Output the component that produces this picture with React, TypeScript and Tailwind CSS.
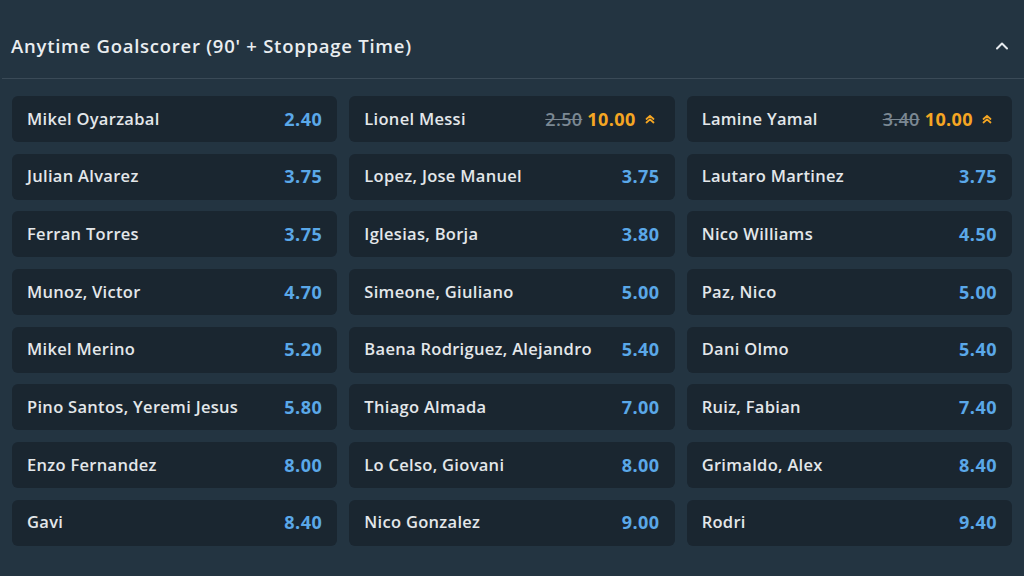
type Pick = { name: string; odds: string; was?: string };

const picks: Pick[] = [
  { name: "Mikel Oyarzabal", odds: "2.40" },
  { name: "Lionel Messi", odds: "10.00", was: "2.50" },
  { name: "Lamine Yamal", odds: "10.00", was: "3.40" },
  { name: "Julian Alvarez", odds: "3.75" },
  { name: "Lopez, Jose Manuel", odds: "3.75" },
  { name: "Lautaro Martinez", odds: "3.75" },
  { name: "Ferran Torres", odds: "3.75" },
  { name: "Iglesias, Borja", odds: "3.80" },
  { name: "Nico Williams", odds: "4.50" },
  { name: "Munoz, Victor", odds: "4.70" },
  { name: "Simeone, Giuliano", odds: "5.00" },
  { name: "Paz, Nico", odds: "5.00" },
  { name: "Mikel Merino", odds: "5.20" },
  { name: "Baena Rodriguez, Alejandro", odds: "5.40" },
  { name: "Dani Olmo", odds: "5.40" },
  { name: "Pino Santos, Yeremi Jesus", odds: "5.80" },
  { name: "Thiago Almada", odds: "7.00" },
  { name: "Ruiz, Fabian", odds: "7.40" },
  { name: "Enzo Fernandez", odds: "8.00" },
  { name: "Lo Celso, Giovani", odds: "8.00" },
  { name: "Grimaldo, Alex", odds: "8.40" },
  { name: "Gavi", odds: "8.40" },
  { name: "Nico Gonzalez", odds: "9.00" },
  { name: "Rodri", odds: "9.40" },
];

function BoostIcon() {
  return (
    <svg width="12" height="12" viewBox="0 0 12 12" fill="none" stroke="#f5a623" strokeWidth="1.8" strokeLinecap="round" strokeLinejoin="round">
      <path d="M2.5 6 L6 2.8 L9.5 6" />
      <path d="M2.5 9.5 L6 6.3 L9.5 9.5" />
    </svg>
  );
}

export default function App() {
  return (
    <div
      className="h-[576px] w-[1024px] overflow-hidden bg-[#233441] text-[#e6eaee]"
      style={{ fontFamily: "'Open Sans', 'Noto Sans', sans-serif" }}
    >
      {/* Header */}
      <div className="ml-[2px] flex h-[79px] items-center justify-between border-b border-[#3a4a57] pl-[9px] pr-[14px] pt-[14px]">
        <h2 className="text-[18.5px] font-semibold tracking-[0.75px] text-[#e9edf0]">
          Anytime Goalscorer (90' + Stoppage Time)
        </h2>
        <svg width="16" height="16" viewBox="0 0 16 16" fill="none" stroke="#e6eaee" strokeWidth="2" strokeLinecap="round" strokeLinejoin="round">
          <path d="M3 10.5 L8 5.5 L13 10.5" />
        </svg>
      </div>

      {/* Grid */}
      <div className="grid grid-cols-3 gap-x-3 gap-y-[11.7px] px-3 pt-[17px]">
        {picks.map((p) => (
          <div
            key={p.name}
            className="flex h-[46px] items-center justify-between rounded-md bg-[#1a2630] pl-[15px] pr-[15px]"
          >
            <span className="text-[16.5px] font-semibold tracking-[0.3px] text-[#e3e7ea]">{p.name}</span>
            {p.was ? (
              <span className="flex items-center gap-[5px] pr-[4px]">
                <span className="text-[18px] font-semibold tracking-[0.3px] text-[#7b8893] line-through">{p.was}</span>
                <span className="text-[18px] font-bold tracking-[0.4px] text-[#f5a623]">{p.odds}</span>
                <span className="ml-[3px]">
                  <BoostIcon />
                </span>
              </span>
            ) : (
              <span className="text-[18px] font-bold tracking-[0.5px] text-[#5aa8e8]">{p.odds}</span>
            )}
          </div>
        ))}
      </div>
    </div>
  );
}
